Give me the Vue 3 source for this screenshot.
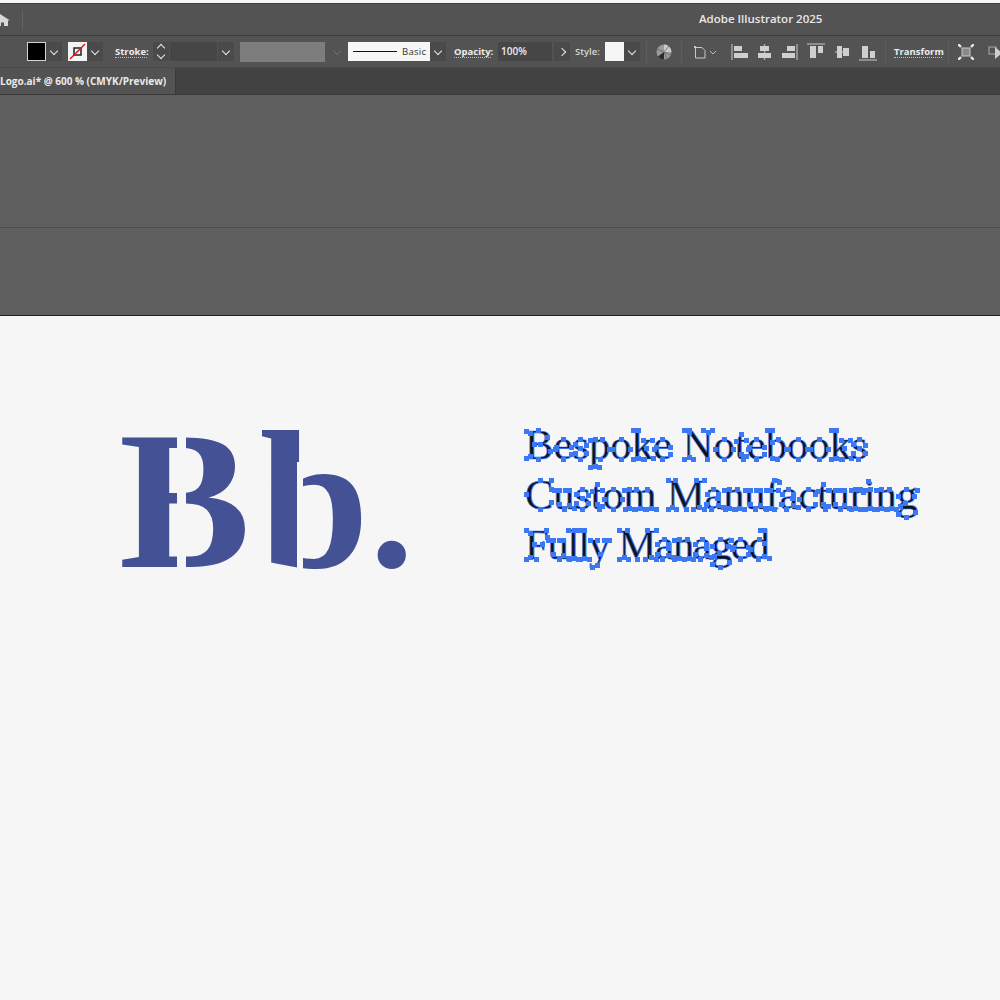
<script setup>
// anchor points per glyph, in em: x from glyph left, y up from the baseline
const anchors = {
  B: [[.02,.64],[.12,.6],[.12,.06],[.02,.01],[.3,.66],[.52,.5],[.35,.35],[.58,.18],[.3,0],[.2,.34]],
  e: [[.03,.22],[.22,.46],[.41,.28],[.06,.28],[.22,-.01],[.41,.1]],
  s: [[.05,.33],[.18,.46],[.32,.32],[.18,.24],[.33,.12],[.17,-.01],[.05,.13]],
  p: [[.02,.43],[.15,.46],[.15,-.17],[.03,-.21],[.24,-.21],[.3,.46],[.47,.23],[.27,-.01]],
  o: [[.03,.22],[.25,.46],[.47,.22],[.25,-.01]],
  k: [[.02,.66],[.14,.68],[.14,.02],[.02,0],[.27,0],[.26,.44],[.48,.44],[.33,.25],[.49,.01],[.3,0]],
  N: [[.02,.66],[.15,.62],[.15,.03],[.02,0],[.25,0],[.58,0],[.6,.63],[.48,.66],[.7,.66],[.15,.66]],
  t: [[.02,.42],[.14,.58],[.14,.1],[.2,-.01],[.27,.07],[.26,.44]],
  b: [[.02,.66],[.14,.68],[.14,.02],[.28,.46],[.47,.22],[.26,-.01],[.15,.38]],
  C: [[.62,.66],[.6,.46],[.35,.68],[.03,.33],[.35,-.01],[.6,.16]],
  u: [[.02,.44],[.14,.44],[.14,.1],[.26,-.01],[.37,.08],[.37,.44],[.27,.44],[.48,.02]],
  m: [[.02,.43],[.14,.46],[.14,.02],[.03,0],[.25,0],[.3,.46],[.38,.02],[.5,0],[.27,0],[.56,.46],[.64,.02],[.76,0],[.54,0]],
  M: [[.02,.66],[.2,.66],[.13,.03],[.02,0],[.22,0],[.44,0],[.68,.66],[.87,.66],[.76,.03],[.62,0],[.87,0]],
  a: [[.05,.35],[.2,.46],[.31,.33],[.31,.08],[.43,.03],[.04,.1],[.16,-.01],[.3,.24]],
  n: [[.02,.43],[.14,.46],[.14,.02],[.03,0],[.25,0],[.33,.46],[.37,.02],[.48,0],[.27,0]],
  f: [[.02,.44],[.1,.44],[.1,.02],[.02,0],[.21,0],[.2,.68],[.32,.62],[.3,.44]],
  c: [[.03,.22],[.24,.46],[.39,.33],[.23,-.01],[.4,.1]],
  r: [[.02,.43],[.13,.46],[.13,.02],[.03,0],[.24,0],[.32,.38],[.25,.46]],
  i: [[.1,.65],[.02,.43],[.14,.46],[.14,.02],[.03,0],[.25,0]],
  g: [[.03,.3],[.22,.46],[.4,.3],[.48,.44],[.2,.14],[.08,.05],[.44,-.09],[.22,-.21],[.03,-.12]],
  F: [[.02,.66],[.12,.6],[.12,.03],[.02,0],[.26,0],[.5,.66],[.52,.5],[.21,.34],[.4,.34]],
  l: [[.02,.66],[.14,.68],[.14,.02],[.03,0],[.25,0]],
  y: [[.02,.44],[.2,.44],[.26,.1],[.35,.44],[.48,.44],[.18,-.16],[.06,-.2]],
  d: [[.03,.22],[.24,.46],[.37,.66],[.28,.68],[.37,.05],[.48,.02],[.22,-.01],[.37,.36]],
}

// spacing evens out the line lengths against the original typeface
const lines = [
  { text: 'Bespoke Notebooks', spacing: 0.08 },
  { text: 'Custom Manufacturing', spacing: -0.15 },
  { text: 'Fully Managed', spacing: -1.15 },
]

function chars(line) {
  return line.split('').map((c) => ({ c, pts: anchors[c] || [] }))
}

// align panel icons: bars as [x, y, w, h], guide line as [x1, y1, x2, y2]
const alignIcons = [
  { w: 17, guide: [1, 1, 1, 17], bars: [[3, 3, 8, 5], [3, 10, 14, 5]] },
  { w: 15, guide: [7.5, 1, 7.5, 17], bars: [[3, 3, 9, 5], [1, 10, 13, 5]] },
  { w: 17, guide: [16, 1, 16, 17], bars: [[6, 3, 8, 5], [1, 10, 13, 5]] },
  { w: 18, guide: [0, 1, 18, 1], bars: [[3, 3, 6, 12], [11, 3, 5, 7]] },
  { w: 16, guide: [1, 9, 15, 9], bars: [[3, 3, 5, 12], [9, 5, 6, 8]] },
  { w: 18, guide: [0, 17, 18, 17], bars: [[3, 3, 6, 12], [11, 8, 5, 7]] },
]
</script>

<template>
  <div class="app">
    <header class="titleBar">
      <svg class="home" width="12" height="14" viewBox="0 0 12 14">
        <path d="M0 1 L1 1 L11 7.5 L9 7.5 L9 13 L5 13 L5 9.5 L2 9.5 L2 13 L0 13 Z" fill="#d8d8d8" />
      </svg>
      <span class="titleDivider"></span>
      <span class="appName">Adobe Illustrator 2025</span>
    </header>

    <div class="controlBar">
      <span class="swatch black"></span>
      <span class="drop"><i class="chev"></i></span>
      <span class="swatch noStroke">
        <svg width="19" height="19" viewBox="0 0 19 19">
          <rect x="6" y="6" width="7" height="7" fill="none" stroke="#222" stroke-width="1.5" />
          <line x1="2" y1="17" x2="17" y2="2" stroke="#e0101c" stroke-width="1.5" />
        </svg>
      </span>
      <span class="drop"><i class="chev"></i></span>
      <span class="label strokeLabel">Stroke:</span>
      <span class="spinner">
        <i class="chev up"></i>
        <i class="chev"></i>
      </span>
      <span class="field strokeField"></span>
      <span class="drop strokeDrop"><i class="chev"></i></span>
      <span class="greyBox"></span>
      <span class="dimDrop"><i class="chev dim"></i></span>
      <span class="brush">
        <span class="brushLine"></span>
        <span class="brushName">Basic</span>
      </span>
      <span class="drop"><i class="chev"></i></span>
      <span class="label opacityLabel">Opacity:</span>
      <span class="field opacityField">100%</span>
      <span class="drop arrowDrop"><i class="chev right"></i></span>
      <span class="plainLabel">Style:</span>
      <span class="swatch styleSwatch"></span>
      <span class="drop"><i class="chev"></i></span>
      <span class="sep sepFirst"></span>
      <svg class="globe" width="16" height="16" viewBox="0 0 16 16">
        <circle cx="8" cy="8" r="7.5" fill="#9a9a9a" />
        <path d="M8 8 L8 .5 A7.5 7.5 0 0 1 15.5 8 Z" fill="#c9c9c9" />
        <path d="M8 8 L2 12.5 A7.5 7.5 0 0 0 8 15.5 Z" fill="#2c2c2c" />
        <path d="M8 8 L1 5 M8 8 L13 2 M8 8 L15 11 M8 8 L11 15" stroke="#666" stroke-width=".8" />
      </svg>
      <span class="sep"></span>
      <svg class="docIcon" width="25" height="14" viewBox="0 0 25 14">
        <path d="M2.5 2.5 H9 L12 5.5 V13 H2.5 Z" fill="none" stroke="#c8c8c8" />
        <rect x="1" y="1" width="2" height="2" fill="#c8c8c8" />
        <path d="M17 6 L20 9 L23 6" fill="none" stroke="#b8b8b8" />
      </svg>
      <div class="alignGroup">
        <svg
          v-for="(icon, i) in alignIcons"
          :key="i"
          :width="icon.w"
          height="18"
          :viewBox="`0 0 ${icon.w} 18`"
        >
          <line
            :x1="icon.guide[0]"
            :y1="icon.guide[1]"
            :x2="icon.guide[2]"
            :y2="icon.guide[3]"
            stroke="#a8a8a8"
            stroke-width="1.4"
          />
          <rect
            v-for="(b, j) in icon.bars"
            :key="j"
            :x="b[0]"
            :y="b[1]"
            :width="b[2]"
            :height="b[3]"
            fill="#cfcfcf"
          />
        </svg>
      </div>
      <span class="sep sepTransform"></span>
      <span class="label transformLabel">Transform</span>
      <span class="sep sepAfter"></span>
      <svg class="isolate" width="16" height="16" viewBox="0 0 16 16">
        <rect x="4" y="4" width="8" height="8" fill="#8a8a8a" stroke="#c8c8c8" />
        <path d="M0 0 L3 3 M16 0 L13 3 M0 16 L3 13 M16 16 L13 13" stroke="#e8e8e8" stroke-width="2.4" />
      </svg>
      <svg class="lastIcon" width="14" height="16" viewBox="0 0 14 16">
        <rect x="1" y="3" width="7" height="7" fill="none" stroke="#aaa" />
        <path d="M7 3 L14 9 L7 15 Z" fill="#cfcfcf" />
      </svg>
    </div>

    <div class="tabBar">
      <div class="tab">Logo.ai* @ 600 % (CMYK/Preview)</div>
    </div>

    <div class="pasteboard">
      <span class="guide"></span>
    </div>

    <main class="artboard">
      <div class="logo">
        <span class="letter letterB">B</span><span class="letter letterSmall">b</span><span class="dot">.</span>
      </div>
      <div class="tagline">
        <div v-for="line in lines" :key="line.text" class="line" :style="{ letterSpacing: line.spacing + 'px' }">
          <span v-for="(g, i) in chars(line.text)" :key="i" class="glyph">
            {{ g.c === ' ' ? '\u00a0' : g.c }}
            <i
              v-for="(p, k) in g.pts"
              :key="k"
              class="anchor"
              :style="{ left: p[0] + 'em', bottom: `calc(${p[1]}em + 10.5px)` }"
            ></i>
          </span>
        </div>
      </div>
    </main>
  </div>
</template>

<style scoped>
.app {
  width: 1000px;
  height: 1000px;
  overflow: hidden;
  display: flex;
  flex-direction: column;
  background: #f6f6f7;
  font-family: "Open Sans", "Liberation Sans", sans-serif;
}

.titleBar {
  height: 33px;
  box-sizing: border-box;
  margin-top: 3px;
  border-top: 1px solid #3c3c3c;
  border-bottom: 1px solid #3f3f3f;
  background: #535353;
  display: flex;
  align-items: center;
  flex: none;
}

.home {
  margin-left: -1px;
}

.titleDivider {
  width: 1px;
  height: 18px;
  margin-left: 11px;
  background: #666;
}

.appName {
  margin-left: 676px;
  margin-bottom: 2px;
  color: #e8e8e8;
  font-size: 11.5px;
  font-weight: 600;
  white-space: nowrap;
}

.controlBar {
  height: 31px;
  background: #535353;
  display: flex;
  align-items: center;
  padding-left: 27px;
  flex: none;
}

.swatch {
  width: 19px;
  height: 19px;
  flex: none;
  box-sizing: border-box;
  display: block;
}

.black {
  background: #000;
  border: 1px solid #d4d4d4;
}

.noStroke {
  background: #f4f4f4;
  margin-left: 6px;
}

.noStroke svg {
  display: block;
}

.drop {
  width: 16px;
  height: 19px;
  flex: none;
  background: #4a4a4a;
  display: flex;
  align-items: center;
  justify-content: center;
}

.chev {
  width: 6px;
  height: 6px;
  box-sizing: border-box;
  border-right: 1.5px solid #e8e8e8;
  border-bottom: 1.5px solid #e8e8e8;
  transform: translateY(-1px) rotate(45deg);
  display: block;
}

.chev.up {
  transform: translateY(1px) rotate(225deg);
}

.chev.right {
  transform: rotate(-45deg);
}

.chev.dim {
  border-color: #6c6c6c;
}

.label {
  color: #ededed;
  font-size: 9.5px;
  font-weight: 700;
  white-space: nowrap;
  border-bottom: 1px dotted #bdbdbd;
  line-height: 11px;
  flex: none;
}

.strokeLabel {
  margin-left: 12px;
  width: 32px;
}

.spinner {
  width: 16px;
  height: 19px;
  margin-left: 6px;
  background: #4a4a4a;
  display: flex;
  flex-direction: column;
  align-items: center;
  justify-content: center;
  gap: 3px;
  flex: none;
}

.field {
  height: 19px;
  background: #464646;
  flex: none;
}

.strokeField {
  width: 47px;
  margin-left: 1px;
}

.strokeDrop {
  margin-left: 1px;
}

.greyBox {
  width: 85px;
  height: 20px;
  margin-left: 6px;
  background: #7d7d7d;
  flex: none;
}

.dimDrop {
  width: 23px;
  display: flex;
  justify-content: center;
  flex: none;
}

.brush {
  width: 82px;
  height: 19px;
  background: #f6f6f6;
  display: flex;
  align-items: center;
  flex: none;
}

.brushLine {
  width: 44px;
  height: 1.5px;
  margin-left: 5px;
  background: #111;
}

.brushName {
  margin-left: 5px;
  color: #333;
  font-size: 9.5px;
  letter-spacing: 0.3px;
}

.opacityLabel {
  margin-left: 8px;
  width: 37px;
}

.opacityField {
  width: 54px;
  margin-left: 7px;
  padding-left: 3px;
  box-sizing: border-box;
  color: #ededed;
  font-size: 10px;
  font-weight: 600;
  line-height: 19px;
}

.arrowDrop {
  margin-left: 2px;
}

.plainLabel {
  margin-left: 5px;
  width: 30px;
  color: #d8d8d8;
  font-size: 9.5px;
  font-weight: 600;
  flex: none;
}

.styleSwatch {
  background: #f6f6f6;
}

.sep {
  width: 1px;
  height: 22px;
  background: #5e5e5e;
  flex: none;
}

.sepFirst {
  margin-left: 6px;
}

.globe {
  margin: 0 9px;
  flex: none;
}

.docIcon {
  margin-left: 11px;
  flex: none;
}

.alignGroup {
  margin-left: 13px;
  display: flex;
  align-items: center;
  gap: 9px;
  flex: none;
}

.sepTransform {
  margin-left: 8px;
}

.transformLabel {
  margin-left: 8px;
  width: 48px;
}

.sepAfter {
  margin-left: 6px;
}

.isolate {
  margin-left: 9px;
  flex: none;
}

.lastIcon {
  margin-left: 14px;
  flex: none;
}

.tabBar {
  height: 28px;
  box-sizing: border-box;
  background: #424242;
  border-top: 1px solid #4a4a4a;
  border-bottom: 1px solid #383838;
  display: flex;
  flex: none;
}

.tab {
  width: 176px;
  background: #535353;
  border-right: 1px solid #3a3a3a;
  box-sizing: border-box;
  color: #eaeaea;
  font-size: 10px;
  font-weight: 700;
  line-height: 26px;
  white-space: nowrap;
}

.pasteboard {
  height: 221px;
  box-sizing: border-box;
  background: repeating-conic-gradient(#626262 0 25%, #5c5c5c 0 50%) 0 0 / 2px 2px;
  border-bottom: 1px solid #1e1e1e;
  position: relative;
  flex: none;
}

.guide {
  position: absolute;
  left: 0;
  right: 0;
  top: 132px;
  height: 1px;
  background: #b82020;
}

.artboard {
  flex: 1;
  display: flex;
  align-items: flex-start;
  padding: 83px 0 0 119px;
}

.logo {
  width: 406px;
  margin-top: 3px;
  flex: none;
  color: #445195;
  font-family: "Liberation Serif", serif;
  font-size: 197px;
  font-weight: 700;
  line-height: 197px;
  white-space: nowrap;
}

.letter {
  position: relative;
  display: inline-block;
}

/* stencil cut between stem and bowls */
.letterB::after,
.letterSmall::after {
  content: "";
  position: absolute;
  background: #f6f6f7;
}

.letterB::after {
  left: 58px;
  top: 30px;
  width: 9px;
  height: 140px;
}

.letterSmall {
  margin-left: 9px;
}

.letterSmall::after {
  left: 38px;
  top: 60px;
  width: 6px;
  height: 110px;
}

.dot {
  margin-left: 1px;
  font-size: 174px;
}

.tagline {
  padding-top: 21px;
  color: #10121c;
  font-family: "Liberation Serif", serif;
  font-size: 42.5px;
}

.line {
  height: 50px;
  line-height: 50px;
  white-space: nowrap;
}

.glyph {
  position: relative;
  display: inline-block;
  -webkit-text-stroke: 0.7px #3b78f5;
}

.anchor {
  position: absolute;
  width: 5px;
  height: 5px;
  margin: 0 0 -2px -2px;
  background: #3b78f5;
}
</style>
